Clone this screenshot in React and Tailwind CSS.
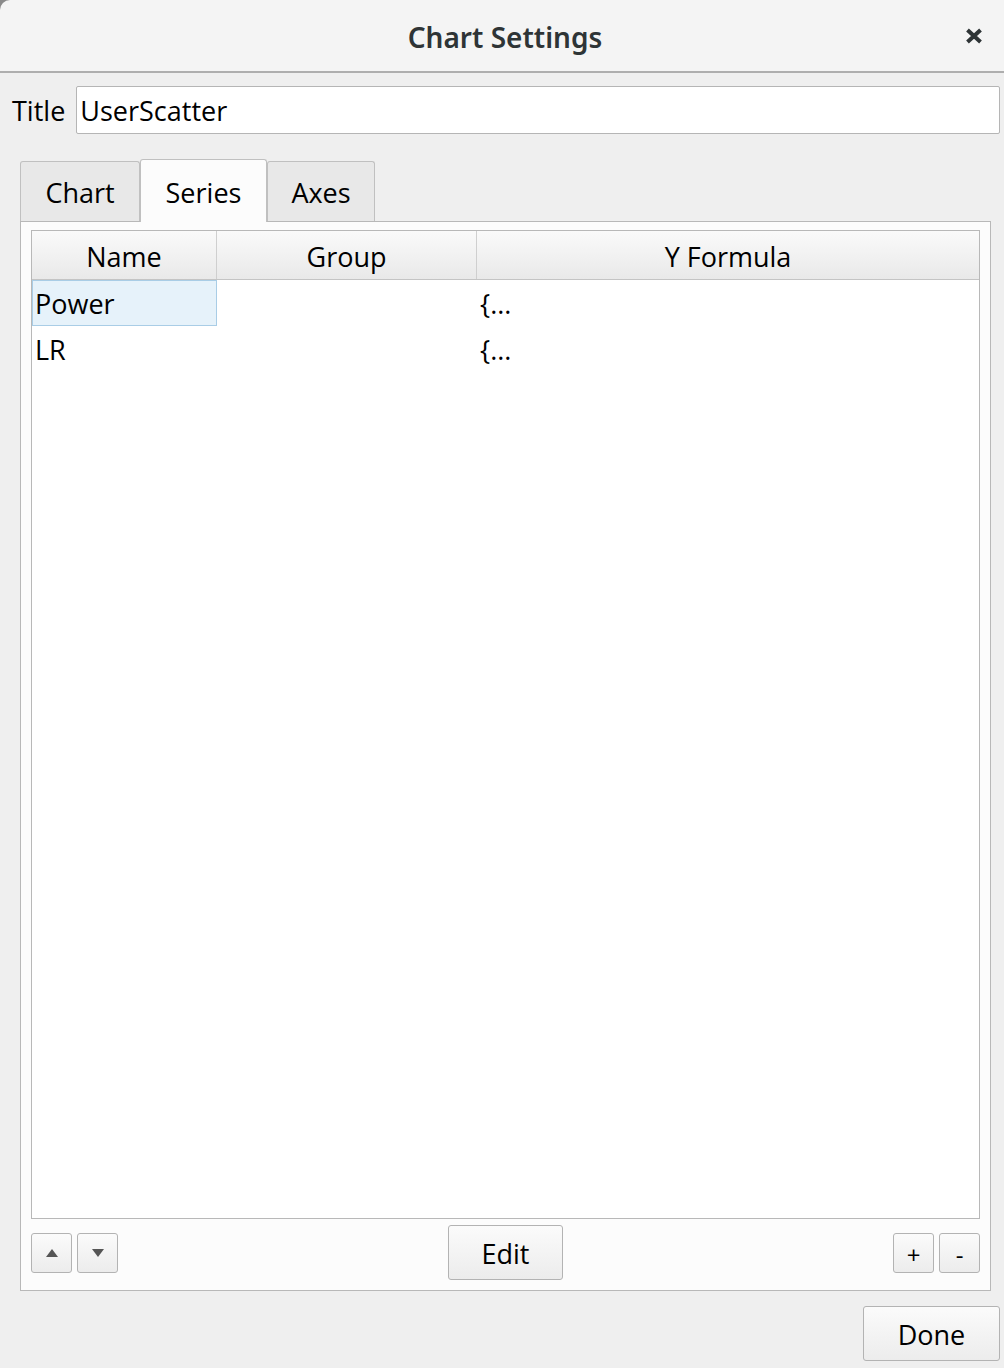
import React from 'react';

const rows = [
    { name: 'Power', group: '', formula: '{...', selected: true },
    { name: 'LR', group: '', formula: '{...', selected: false },
];

const btn = 'border border-[#b3b3b3] rounded-[3px] bg-gradient-to-b from-[#fbfbfb] to-[#ececec]';

const App = () => {
    return (
        <div className="w-[1004px] h-[1368px] bg-[#efefef] flex flex-col overflow-hidden" style={{ fontFamily: '"Open Sans", "Noto Sans", sans-serif' }}>

            {/* Title bar */}
            <div className="bg-[#8a8a8a] shrink-0">
                <div className="h-[73px] bg-[#f4f4f4] rounded-tl-[10px] border-b-2 border-[#aeaeae] flex items-center relative">
                    <div className="flex-1 text-center text-[28px] font-semibold text-[#2e3436] pt-[3px] pl-[6px]" style={{ fontFamily: '"Noto Sans", sans-serif' }}>
                        Chart Settings
                    </div>
                    <svg className="absolute right-[21px] top-[28px]" width="18" height="16" viewBox="0 0 18 16">
                        <path d="M2.5 2 L15.5 14 M15.5 2 L2.5 14" stroke="#2e3436" strokeWidth="4" strokeLinecap="butt" />
                    </svg>
                </div>
            </div>

            {/* Title field */}
            <div className="flex items-center pl-[12px] pr-[4px] pt-[13px] gap-[11px]">
                <span className="text-[27px] text-black pt-[2px]">Title</span>
                <div className="flex-1 h-[48px] bg-white border border-[#b5b5b5] rounded-[2px] flex items-center px-[3px] pt-[2px] text-[27px] text-black">
                    UserScatter
                </div>
            </div>

            {/* Tabs */}
            <div className="pl-[20px] pr-[13px] pt-[24px] flex flex-col flex-1">
                <div className="flex items-end h-[63px]">
                    <div className="w-[120px] h-[60px] bg-[#e8e8e8] border border-[#c0c0c0] border-b-0 rounded-t-[3px] flex items-center justify-center pt-[4px] text-[27px] text-black">Chart</div>
                    <div className="w-[127px] h-[63px] bg-[#fcfcfc] border border-[#c0c0c0] border-b-0 rounded-t-[3px] flex items-center justify-center pt-[4px] text-[27px] text-black -mb-px relative z-10">Series</div>
                    <div className="w-[108px] h-[60px] bg-[#e8e8e8] border border-[#c0c0c0] border-b-0 rounded-t-[3px] flex items-center justify-center pt-[4px] text-[27px] text-black">Axes</div>
                </div>

                {/* Panel */}
                <div className="w-[971px] h-[1070px] bg-[#fcfcfc] border border-[#b8b8b8] flex flex-col px-[10px] pt-[8px]">
                    {/* Table */}
                    <div className="h-[989px] bg-white border border-[#b8b8b8] flex flex-col">
                        <div className="flex h-[49px] border-b border-[#c4c4c4] bg-gradient-to-b from-[#fafafa] to-[#e9e9e9] text-[27px] text-black">
                            <div className="w-[185px] border-r border-[#cfcfcf] flex items-center justify-center pt-[4px]">Name</div>
                            <div className="w-[260px] border-r border-[#cfcfcf] flex items-center justify-center pt-[4px]">Group</div>
                            <div className="flex-1 flex items-center justify-center pt-[4px]">Y Formula</div>
                        </div>
                        {rows.map((r) => (
                            <div key={r.name} className="flex h-[46px] text-[27px] text-black">
                                <div className={r.selected ? 'w-[185px] bg-[#e6f2fa] border border-[#a9cde6] flex items-center px-[2px] pt-[3px]' : 'w-[185px] flex items-center px-[3px] pt-[3px]'}>{r.name}</div>
                                <div className="w-[260px] flex items-center">{r.group}</div>
                                <div className="flex-1 flex items-center px-[3px] pt-[3px]">{r.formula}</div>
                            </div>
                        ))}
                    </div>

                    {/* Bottom controls */}
                    <div className="flex items-start mt-[6px]">
                        <div className="flex gap-[5px] mt-[8px]">
                            <button className={`w-[41px] h-[40px] ${btn} flex items-center justify-center`}>
                                <svg width="14" height="10" viewBox="0 0 14 10"><polygon points="7,1 13,9 1,9" fill="#555" /></svg>
                            </button>
                            <button className={`w-[41px] h-[40px] ${btn} flex items-center justify-center`}>
                                <svg width="14" height="10" viewBox="0 0 14 10"><polygon points="1,1 13,1 7,9" fill="#555" /></svg>
                            </button>
                        </div>
                        <div className="flex-1 flex justify-center">
                            <button className={`w-[115px] h-[55px] ${btn} text-[27px] text-black pt-[4px]`}>Edit</button>
                        </div>
                        <div className="flex gap-[5px] mt-[8px]">
                            <button className={`w-[41px] h-[40px] ${btn} text-[24px] text-black leading-none pt-[3px]`}>+</button>
                            <button className={`w-[41px] h-[40px] ${btn} text-[24px] text-black leading-none pt-[3px]`}>-</button>
                        </div>
                    </div>
                </div>

                {/* Done */}
                <div className="flex justify-end mt-[15px] -mr-[9px]">
                    <button className={`w-[137px] h-[55px] ${btn} text-[27px] text-black pt-[4px]`}>Done</button>
                </div>
            </div>
        </div>
    );
};

export default App;
